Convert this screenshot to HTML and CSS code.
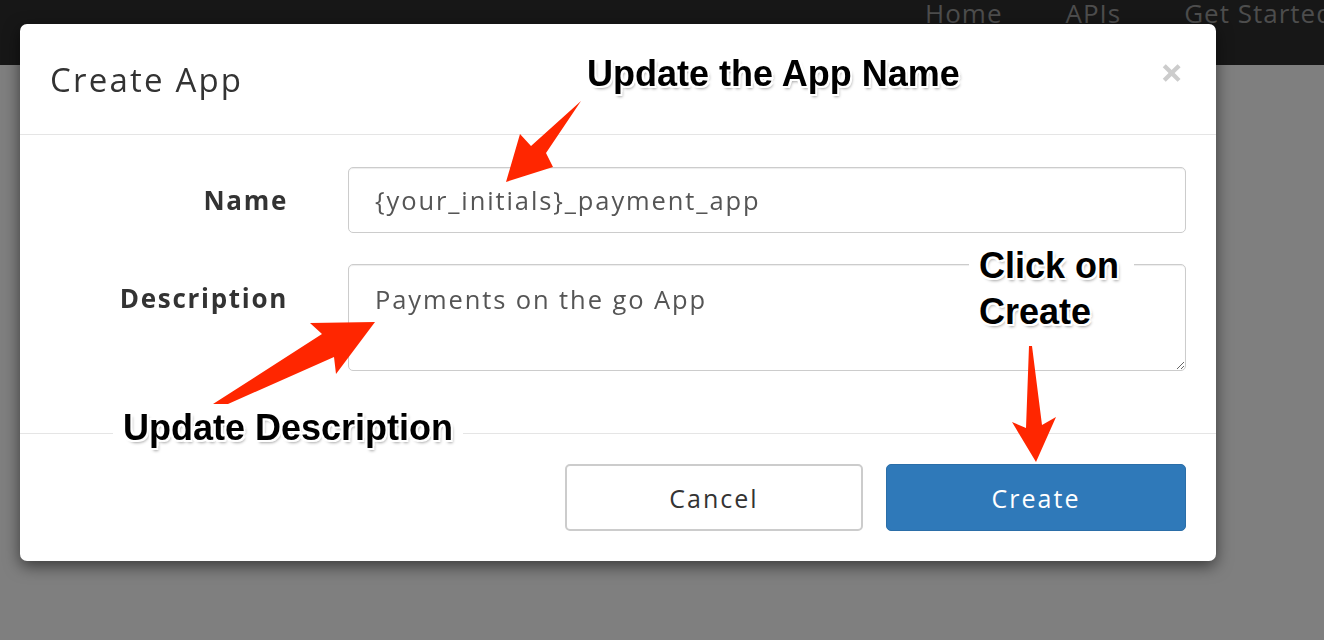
FILE: index.html
```html
<!DOCTYPE html>
<html lang="en">
<head>
<meta charset="utf-8">
<title>Create App</title>
<link rel="stylesheet" href="styles.css">
</head>
<body>
<nav class="topnav">
  <a class="nav-link" href="#">Home</a>
  <a class="nav-link" href="#">APIs</a>
  <a class="nav-link" href="#">Get Started</a>
</nav>

<div class="modal">
  <div class="modal-header">
    <h2 class="modal-title">Create App</h2>
    <span class="close">&times;</span>
  </div>
  <form class="modal-body">
    <label class="form-label name-label" for="app-name">Name</label>
    <input id="app-name" class="form-input" type="text" value="{your_initials}_payment_app">
    <label class="form-label desc-label" for="app-desc">Description</label>
    <textarea id="app-desc" class="form-textarea">Payments on the go App</textarea>
  </form>
  <div class="modal-footer">
    <button class="btn btn-default" type="button">Cancel</button>
    <button class="btn btn-primary" type="button">Create</button>
  </div>
</div>

<svg class="arrows" width="1324" height="640" viewBox="0 0 1324 640">
  <polygon fill="#ff2600" points="581,101 546,153 553,167 506,182 520,134 531,146"/>
  <polygon fill="#ff2600" points="213,404 322,334 310,323 375,322 336,374 334,357 228,404"/>
  <polygon fill="#ff2600" points="1029,346 1032,346 1042,425 1056,417 1036,462 1012,422 1026,428"/>
</svg>

<div class="note note-name">Update the App Name</div>
<div class="note note-create">Click on<br>Create</div>
<div class="note note-desc">Update Description</div>
</body>
</html>
```

FILE: styles.css
```css
html, body {
  margin: 0;
  padding: 0;
}

body {
  width: 1324px;
  height: 640px;
  overflow: hidden;
  background: #7f7f7f;
  font-family: "Open Sans", "DejaVu Sans", sans-serif;
}

.topnav {
  height: 65px;
  background: #171717;
  display: flex;
  justify-content: flex-start;
  padding-left: 925px;
  gap: 63px;
  box-sizing: border-box;
  overflow: hidden;
  white-space: nowrap;
}

.nav-link {
  color: #4d4d4d;
  text-decoration: none;
  font-size: 26px;
  letter-spacing: 1px;
  line-height: 30px;
  margin-top: -2px;
}

.modal {
  position: fixed;
  left: 20px;
  top: 24px;
  width: 1196px;
  height: 537px;
  background: #fff;
  border-radius: 7px;
  box-shadow: 0 5px 16px rgba(0, 0, 0, 0.55);
  display: flex;
  flex-direction: column;
  color: #333;
}

.modal-header {
  height: 111px;
  box-sizing: border-box;
  border-bottom: 1px solid #e5e5e5;
  display: flex;
  align-items: center;
  justify-content: space-between;
  padding: 0 33px 0 30px;
}

.modal-title {
  margin: 0;
  font-weight: 400;
  font-size: 33px;
  color: #333;
  letter-spacing: 2.2px;
}

.close {
  color: #cccccc;
  font-size: 40px;
  font-weight: 700;
  line-height: 1;
  margin-top: -14px;
}

.modal-body {
  margin: 0;
  padding: 32px 30px 62px 30px;
  display: grid;
  grid-template-columns: 237px 1fr;
  column-gap: 61px;
  row-gap: 31px;
}

.form-label {
  font-weight: 700;
  font-size: 26px;
  letter-spacing: 1.7px;
  color: #333;
  text-align: right;
  margin-right: -1px;
}

.name-label {
  align-self: center;
}

.desc-label {
  align-self: start;
  padding-top: 16px;
}

.form-input,
.form-textarea {
  font-family: "Open Sans", "DejaVu Sans", sans-serif;
  font-size: 25.5px;
  letter-spacing: 1.9px;
  color: #555;
  border: 1px solid #cccccc;
  border-radius: 5px;
  box-shadow: inset 0 1px 1px rgba(0, 0, 0, 0.075);
  box-sizing: border-box;
  margin: 0;
  background: #fff;
  outline: none;
}

.form-input {
  height: 66px;
  padding: 0 26px;
}

.form-textarea {
  height: 107px;
  padding: 17px 26px;
  line-height: 34px;
  resize: vertical;
}

.modal-footer {
  border-top: 1px solid #e5e5e5;
  padding: 30px 30px 30px 30px;
  display: flex;
  justify-content: flex-end;
  gap: 23px;
}

.btn {
  height: 67px;
  font-family: "Open Sans", "DejaVu Sans", sans-serif;
  font-size: 25px;
  letter-spacing: 2px;
  border-radius: 5px;
  cursor: pointer;
  padding: 0;
}

.btn-default {
  width: 298px;
  background: #fff;
  color: #333;
  border: 2px solid #cccccc;
}

.btn-primary {
  width: 300px;
  background: #2f79b9;
  color: #fff;
  border: 1px solid #2b6ea8;
}

.arrows {
  position: absolute;
  left: 0;
  top: 0;
  pointer-events: none;
}

.note {
  position: absolute;
  background: #fff;
  padding: 0 10px;
  font-family: "Liberation Sans", Arial, sans-serif;
  font-weight: 700;
  font-size: 36px;
  line-height: 46px;
  color: #000;
  white-space: nowrap;
  text-shadow:
    1px 1px 0 #fff, -1px -1px 0 #fff, 1px -1px 0 #fff, -1px 1px 0 #fff,
    2px 2px 0 #fff, -2px -2px 0 #fff, 2px -2px 0 #fff, -2px 2px 0 #fff,
    2px 3px 3px rgba(0, 0, 0, 0.35);
}

.note-name {
  left: 577px;
  top: 51px;
  background: transparent;
}

.note-create {
  left: 969px;
  top: 243px;
  padding: 0 15px 0 10px;
}

.note-desc {
  left: 113px;
  top: 405px;
}
```
